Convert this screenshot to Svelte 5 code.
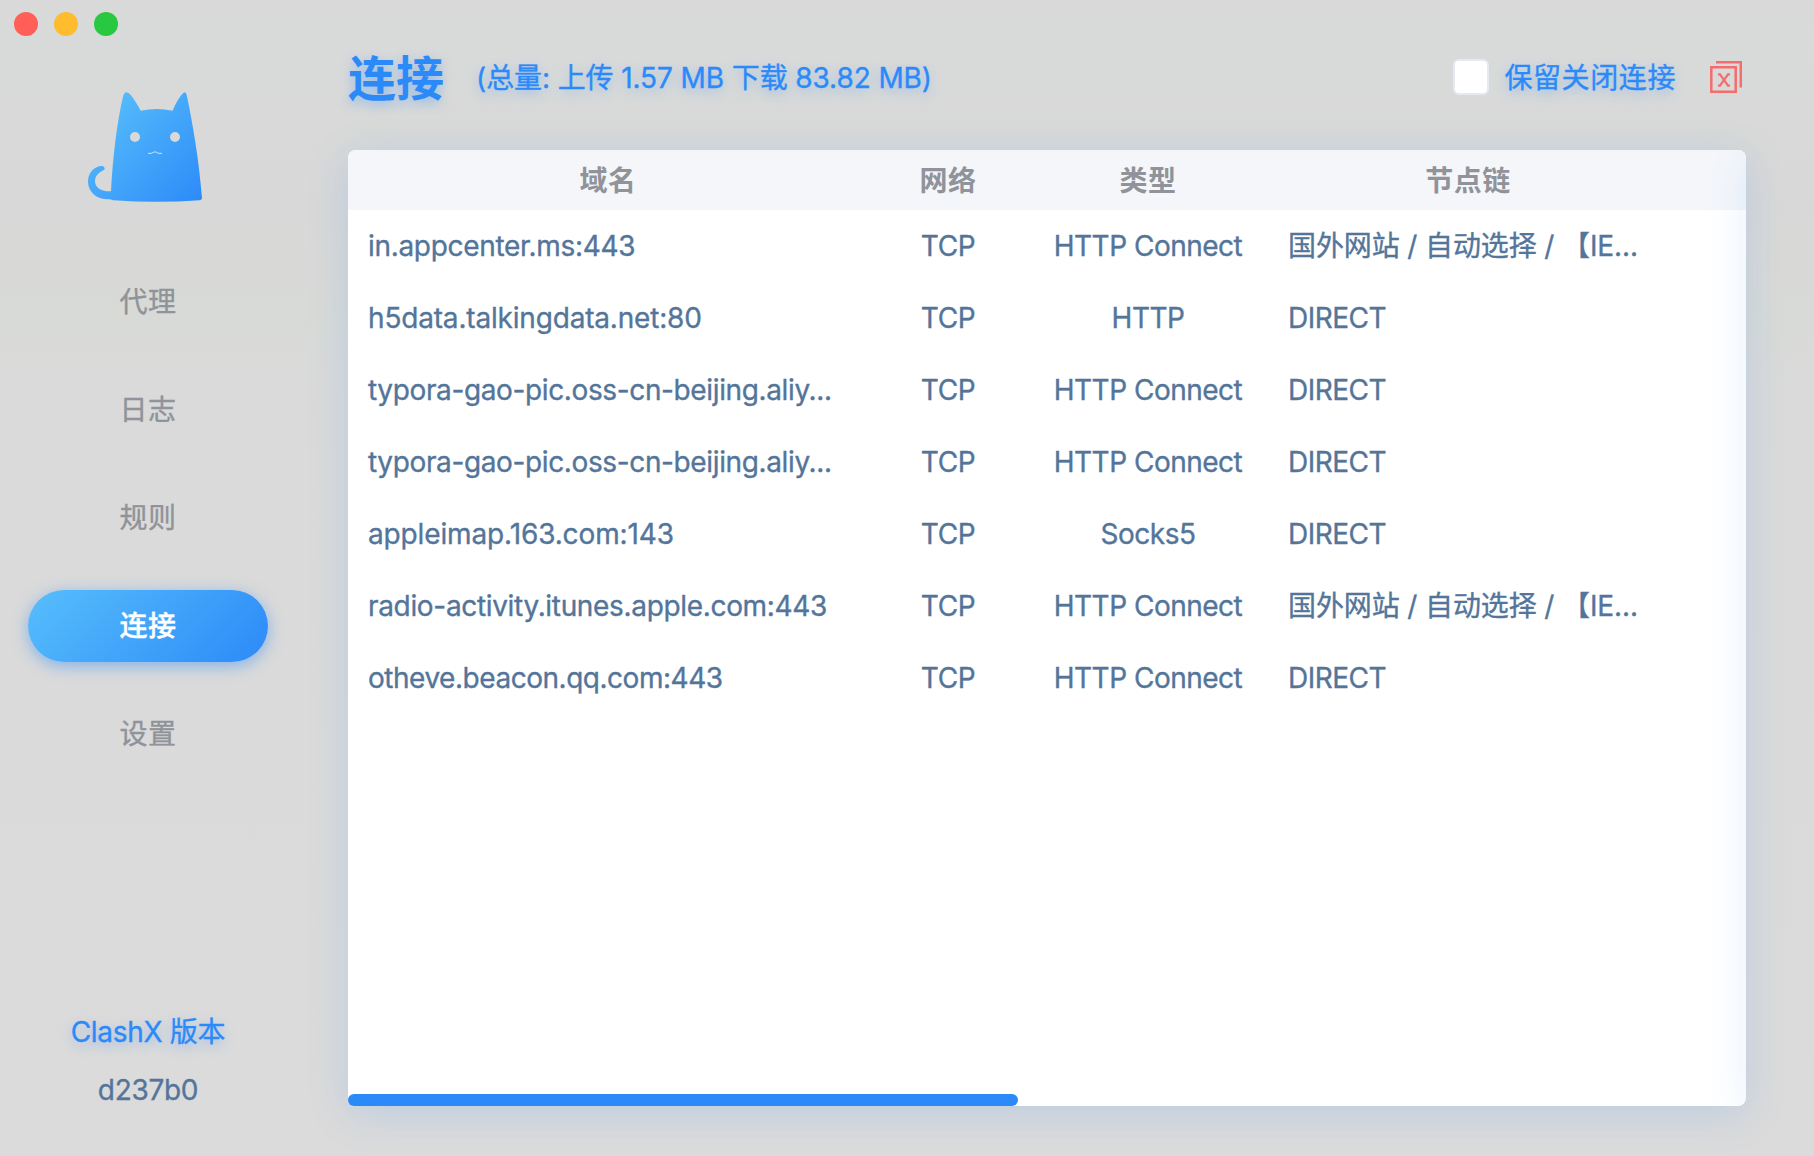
<script>
  const menu = ['代理', '日志', '规则', '连接', '设置'];
  const active = '连接';
  const columns = ['域名', '网络', '类型', '节点链'];
  // The last value is the tracking of the host name, in pixels.
  const rows = [
    ['in.appcenter.ms:443', 'HTTP Connect', '国外网站 / 自动选择 / 【IE...', -0.31],
    ['h5data.talkingdata.net:80', 'HTTP', 'DIRECT', -0.18],
    ['typora-gao-pic.oss-cn-beijing.aliy...', 'HTTP Connect', 'DIRECT', -0.37],
    ['typora-gao-pic.oss-cn-beijing.aliy...', 'HTTP Connect', 'DIRECT', -0.37],
    ['appleimap.163.com:143', 'Socks5', 'DIRECT', -0.13],
    ['radio-activity.itunes.apple.com:443', 'HTTP Connect', '国外网站 / 自动选择 / 【IE...', -0.33],
    ['otheve.beacon.qq.com:443', 'HTTP Connect', 'DIRECT', -0.47],
  ];
</script>

<div class="app">
  <aside>
    <div class="lights"><i class="red"></i><i class="amber"></i><i class="green"></i></div>
    <svg class="logo" viewBox="264 276 342 330" width="114" height="110" aria-hidden="true">
      <defs>
        <linearGradient id="fur" x1="264" y1="276" x2="606" y2="606" gradientUnits="userSpaceOnUse">
          <stop offset="0.1" stop-color="#57befc" />
          <stop offset="1" stop-color="#2c8af8" />
        </linearGradient>
      </defs>
      <path
        fill="url(#fur)"
        fill-rule="evenodd"
        d="M333 574 C338 478 350 370 370 286 Q374 273 384 278 C395 284 413 314 422 332 Q471 322 518 332 C526 312 539 288 551 278 Q557 273 560 284 C578 370 597 480 606 595 Q606 600 599 601 Q470 610 340 601 L330 598 C290 600 264 575 264 545 C264 516 286 497 306 498 Q315 499 314 507 C309 515 286 518 285 543 C285 562 302 575 333 574 Z M390 411 a15 15 0 1 0 30 0 a15 15 0 1 0 -30 0 Z M510 411 a15 15 0 1 0 30 0 a15 15 0 1 0 -30 0 Z"
      />
      <path d="M444 460 Q455 462 460 457 Q465 454 470 457 Q475 462 486 460" fill="none" stroke="#d3e5f6" stroke-width="3" />
    </svg>
    <nav>
      {#each menu as item}
        <a class:active={item === active}>{item}</a>
      {/each}
    </nav>
    <div class="version">
      <p class="label">ClashX 版本</p>
      <p class="hash">d237b0</p>
    </div>
  </aside>

  <main>
    <header>
      <h1>连接</h1>
      <span class="total">(总量: 上传 1.57 MB 下载 83.82 MB)</span>
      <span class="box"></span>
      <span class="keep">保留关闭连接</span>
      <svg class="close" viewBox="0 0 32 32" width="32" height="32" fill="none" stroke="#f56c6c" aria-hidden="true">
        <path d="M1.3 6.3 H25.7 V30.7 H1.3 Z M6 1.2 H30.8 V26.5" stroke-width="2.5" />
        <path d="M8 13.4 H10 L18 24.6 H20 M20 13.4 H18 L10 24.6 H8" stroke-width="2.2" />
      </svg>
    </header>

    <section class="card">
      <div class="row head">
        {#each columns as c}<span>{c}</span>{/each}
      </div>
      {#each rows as [host, type, chain, tracking]}
        <div class="row">
          <span class="host" style:letter-spacing="{tracking}px">{host}</span>
          <span class="net">TCP</span>
          <span class="type">{type}</span>
          <span class="chain" class:direct={chain === 'DIRECT'}>{chain}</span>
        </div>
      {/each}
      <div class="scroll"></div>
      <div class="edge"></div>
    </section>
  </main>
</div>

<style>
  :global(body) {
    margin: 0;
    background: #dadada;
  }
  .app {
    display: flex;
    width: 1814px;
    height: 1156px;
    overflow: hidden;
    background: linear-gradient(#d9d9d9, #d8dad9 7%, #d8d8d8 18%, #d8dad7 26%, #dadada 34%, #dbdbdb);
    font-family: Inter, 'Noto Sans CJK SC', sans-serif;
    font-size: 28px;
    -webkit-text-stroke: 0.35px currentColor;
    color: #54759a;
  }
  aside {
    width: 296px;
    flex: none;
    display: flex;
    flex-direction: column;
    align-items: center;
  }
  .lights {
    align-self: flex-start;
    display: flex;
    gap: 16px;
    padding: 12px 0 0 14px;
    height: 24px;
  }
  .lights i {
    width: 24px;
    height: 24px;
    border-radius: 50%;
  }
  .red { background: #ff5f57; }
  .amber { background: #febc2e; }
  .green { background: #28c840; }
  .logo {
    flex: none;
    display: block;
    margin: 56px 6px 0 0;
  }
  nav {
    display: flex;
    flex-direction: column;
    gap: 36px;
    margin-top: 64px;
  }
  nav a {
    width: 240px;
    height: 72px;
    line-height: 72px;
    border-radius: 36px;
    text-align: center;
    color: #909399;
    letter-spacing: 0.4px;
  }
  nav a.active {
    color: #fff;
    font-weight: 500;
    background: linear-gradient(135deg, #57befc, #2c8af8);
    box-shadow: 0 4px 16px rgba(44, 138, 248, 0.5);
  }
  .version {
    margin-top: auto;
    padding-bottom: 37px;
    text-align: center;
  }
  .version p {
    margin: 0;
    line-height: 58px;
    height: 58px;
  }
  .version .label {
    color: #2c8af8;
    letter-spacing: -0.3px;
    text-shadow: 0 4px 12px rgba(44, 138, 248, 0.4);
  }
  .version .hash {
    letter-spacing: -0.3px;
  }
  main {
    width: 1398px;
    margin-left: 52px;
    display: flex;
    flex-direction: column;
  }
  header {
    height: 150px;
    padding-top: 3px;
    box-sizing: border-box;
    display: flex;
    align-items: center;
    flex: none;
    color: #2c8af8;
    text-shadow: 0 4px 12px rgba(44, 138, 248, 0.4);
    white-space: nowrap;
  }
  h1 {
    margin: 4px 32px 0 0;
    font-size: 48px;
    line-height: 60px;
    font-weight: 700;
    -webkit-text-stroke: 0;
  }
  .total {
    margin-bottom: 2px;
    letter-spacing: -0.1px;
  }
  .box {
    width: 32px;
    height: 32px;
    margin-left: auto;
    border: 2px solid #e4eaef;
    border-radius: 6px;
    background: #fff;
  }
  .keep {
    margin: 0 34px 2px 15px;
    letter-spacing: 0.6px;
  }
  .close {
    margin-right: 4px;
  }
  .card {
    position: relative;
    height: 956px;
    background: #fff;
    border-radius: 8px;
    box-shadow: 0 8px 40px rgba(44, 138, 248, 0.17);
  }
  .row {
    display: grid;
    grid-template-columns: 520px 160px 240px 400px;
    height: 72px;
    line-height: 72px;
    text-align: center;
    white-space: nowrap;
  }
  .row.head {
    height: 60px;
    line-height: 62px;
    border-radius: 8px 8px 0 0;
    background: #f4f6fa;
    color: #909399;
    font-weight: 700;
    letter-spacing: 0.5px;
    -webkit-text-stroke: 0;
  }
  .row .host,
  .row .chain {
    text-align: left;
    padding-left: 20px;
  }
  .net {
    letter-spacing: -0.4px;
  }
  .type,
  .chain.direct {
    letter-spacing: -0.5px;
  }
  .chain {
    letter-spacing: -0.12px;
  }
  .scroll {
    position: absolute;
    left: 0;
    bottom: 0;
    width: 670px;
    height: 12px;
    border-radius: 6px;
    background: #2c8af8;
  }
  .edge {
    position: absolute;
    top: 0;
    right: 0;
    width: 44px;
    height: 100%;
    overflow: hidden;
    border-radius: 0 8px 8px 0;
  }
  .edge::after {
    content: '';
    display: block;
    width: 100%;
    height: 100%;
    margin-left: 100%;
    box-shadow: 0 8px 40px rgba(44, 138, 248, 0.11);
  }
</style>
